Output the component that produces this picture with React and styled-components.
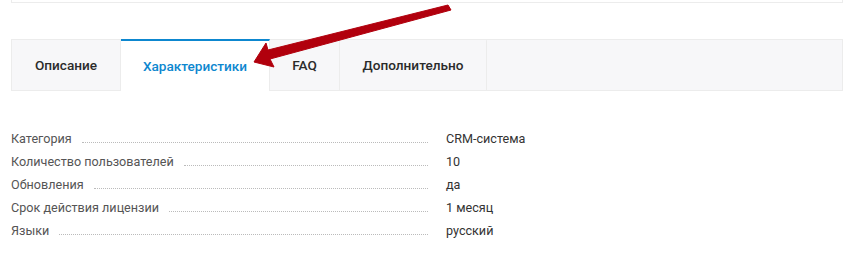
import React from 'react'
import styled, { createGlobalStyle } from 'styled-components'

const Global = createGlobalStyle`
    body {
        margin: 0;
        background: #fff;
        font-family: Roboto, "Liberation Sans", Arial, sans-serif;
    }
`

const Page = styled.div`
    position: relative;
    padding: 0 6px 0 11px;
    width: 849px;
    height: 279px;
    box-sizing: border-box;
`

const TopBox = styled.div`
    height: 2px;
    border: 1px solid #ececec;
    border-top: none;
`

const Tabs = styled.div`
    display: flex;
    margin-top: 36px;
    height: 52px;
    background: #f7f7f9;
    border: 1px solid #ececec;
    box-sizing: border-box;
`

const Tab = styled.div`
    display: flex;
    align-items: center;
    justify-content: center;
    width: ${p => p.w}px;
    box-sizing: border-box;
    margin-top: -1px;
    margin-bottom: ${p => (p.active ? '-1px' : '0')};
    border-right: 1px solid #ececec;
    border-top: 2px solid ${p => (p.active ? '#0d87cf' : 'transparent')};
    background: ${p => (p.active ? '#fff' : 'transparent')};
    color: ${p => (p.active ? '#0d87cf' : '#2b2b2b')};
    font-size: 13.6px;
    font-weight: 500;
    padding-bottom: 1px;
`

const Specs = styled.div`
    margin-top: 40px;
`

const Row = styled.div`
    display: flex;
    align-items: baseline;
    height: 23px;
    font-size: 12.6px;
`

const Label = styled.div`
    display: flex;
    align-items: baseline;
    width: 417px;
    color: #555;
    white-space: nowrap;
    &::after {
        content: '';
        flex: 1;
        margin-left: 10px;
        border-bottom: 1px dotted #bbb;
    }
`

const Value = styled.div`
    margin-left: 18px;
    color: #333;
`

const Arrow = styled.svg`
    position: absolute;
    left: 0;
    top: 0;
    pointer-events: none;
`

const tabs = [
    { name: 'Описание', w: 109 },
    { name: 'Характеристики', w: 149, active: true },
    { name: 'FAQ', w: 70 },
    { name: 'Дополнительно', w: 147 },
]

const specs = [
    ['Категория', 'CRM-система'],
    ['Количество пользователей', '10'],
    ['Обновления', 'да'],
    ['Срок действия лицензии', '1 месяц'],
    ['Языки', 'русский'],
]

const App = () => {
    return (
        <Page>
            <Global />
            <TopBox />
            <Tabs>
                {tabs.map(t => (
                    <Tab key={t.name} w={t.w} active={t.active}>{t.name}</Tab>
                ))}
            </Tabs>
            <Specs>
                {specs.map(([k, v]) => (
                    <Row key={k}>
                        <Label>{k}</Label>
                        <Value>{v}</Value>
                    </Row>
                ))}
            </Specs>
            <Arrow width="849" height="279">
                <polygon
                    points="254,62 266,43 268,50 448,5 451,10 270,59 274,67"
                    fill="#b1000d"
                    stroke="#b1000d"
                    strokeWidth="1"
                    strokeLinejoin="round"
                />
            </Arrow>
        </Page>
    )
}

export default App
